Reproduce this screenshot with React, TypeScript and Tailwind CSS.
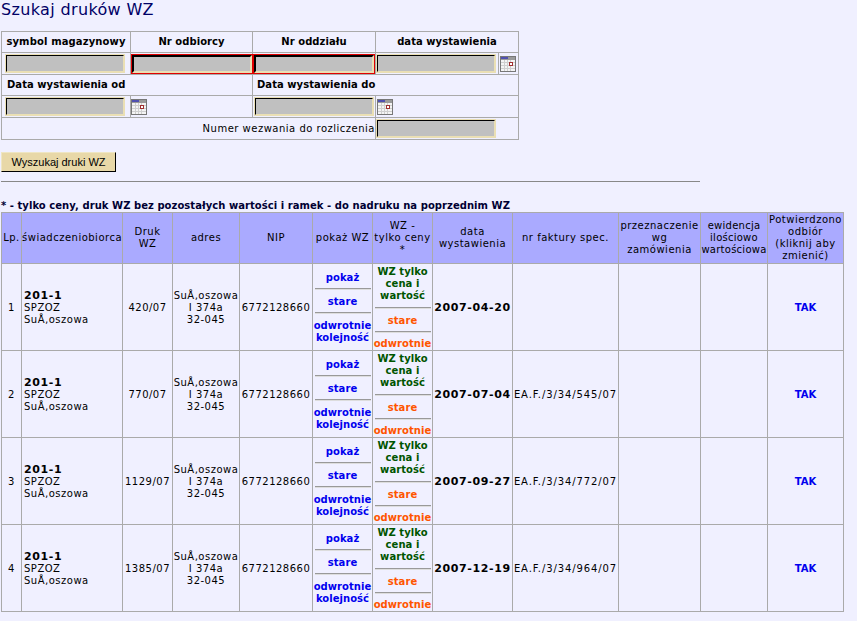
const font = "font-['DejaVu_Sans','Verdana',sans-serif]";

function CalendarIcon() {
  return (
    <svg width="16" height="16" viewBox="0 0 16 16" className="block">
      <rect x="0.5" y="0.5" width="15" height="15" fill="#f4f4f4" stroke="#777" />
      <rect x="1" y="1" width="14" height="3" fill="#9a9a9a" />
      <rect x="1" y="1" width="7" height="2" fill="#5050b0" />
      <path d="M1 6.5H15M1 9.5H15M1 12.5H15M4.5 4V15M7.5 4V15M10.5 4V15" stroke="#cfcfcf" strokeWidth="1" />
      <rect x="9.5" y="6.5" width="3" height="3" fill="#fff" stroke="#a03030" />
    </svg>
  );
}

function Field({ red = false }: { red?: boolean }) {
  return (
    <input
      readOnly
      className={
        red
          ? "block w-[120px] h-[18px] mx-auto bg-[#c0c0c0] border-2 border-t-black border-l-black border-r-[#eadfb4] border-b-[#eadfb4] outline outline-1 outline-offset-0 outline-[#e00000]"
          : "block w-[118px] h-[17px] m-[1px] bg-[#c0c0c0] border border-t-black border-l-black border-r-[#eadfb4] border-b-[#eadfb4] outline outline-1 outline-offset-0 outline-[#eadfb4]"
      }
    />
  );
}

const cols = [20, 101, 50, 67, 73, 60, 60, 80, 106, 82, 67, 76];
const headers = [
  <>Lp.</>,
  <>świadczeniobiorca</>,
  <>Druk<br />WZ</>,
  <>adres</>,
  <>NIP</>,
  <>pokaż WZ</>,
  <>WZ -<br />tylko ceny<br />*</>,
  <>data<br />wystawienia</>,
  <>nr faktury spec.</>,
  <>przeznaczenie<br />wg<br />zamówienia</>,
  <span className="tracking-[0.25px]">ewidencja<br />ilościowo<br />wartościowa</span>,
  <>Potwierdzono<br />odbiór<br />(kliknij aby<br />zmienić)</>,
];
const rows = [
  { n: 1, druk: "420/07", data: "2007-04-20", fak: "" },
  { n: 2, druk: "770/07", data: "2007-07-04", fak: "EA.F./3/34/545/07" },
  { n: 3, druk: "1129/07", data: "2007-09-27", fak: "EA.F./3/34/772/07" },
  { n: 4, druk: "1385/07", data: "2007-12-19", fak: "EA.F./3/34/964/07" },
];
const cell = "border border-[#aaaaaa] p-0 text-center align-middle";
const mid = `${cell} pt-[2px]`;
const sep = "w-[56px] mx-auto border-t border-[#999999] border-b border-b-[#dddddd] h-[2px]";
const bold = "font-bold tracking-[0.05px]";

export default function App() {
  return (
    <div className={`${font} w-[857px] h-[621px] overflow-hidden bg-[#f0f0ff] text-[10px] tracking-[0.5px] leading-[12px] text-black`}>
      <h1 className="text-[16px] tracking-[0.35px] leading-[20px] text-[#000066] pl-[1px] h-[31px]">Szukaj druków WZ</h1>

      <table className="ml-[1px] w-[517px] table-fixed border-collapse">
        <colgroup>
          <col className="w-[129px]" />
          <col className="w-[122px]" />
          <col className="w-[123px]" />
          <col className="w-[123px]" />
          <col className="w-[20px]" />
        </colgroup>
        <tbody>
          <tr className={`h-[21px] ${bold}`}>
            <td className={`${cell} whitespace-nowrap tracking-[0.13px]`}>symbol magazynowy</td>
            <td className={cell}>Nr odbiorcy</td>
            <td className={cell}>Nr oddziału</td>
            <td className={cell} colSpan={2}>data wystawienia</td>
          </tr>
          <tr className="h-[22px]">
            <td className={cell}><div className="pl-[3px]"><Field /></div></td>
            <td className={cell}><Field red /></td>
            <td className={cell}><Field red /></td>
            <td className={cell}><Field /></td>
            <td className={cell}><div className="pl-[1px]"><CalendarIcon /></div></td>
          </tr>
          <tr className={`h-[21px] ${bold}`}>
            <td className={`${cell} !text-left pl-[5px] whitespace-nowrap`} colSpan={2}>Data wystawienia od</td>
            <td className={`${cell} !text-left pl-[4px] whitespace-nowrap`} colSpan={3}>Data wystawienia do</td>
          </tr>
          <tr className="h-[22px]">
            <td className={cell}><div className="pl-[3px]"><Field /></div></td>
            <td className={cell}><CalendarIcon /></td>
            <td className={cell}><div className="pl-[1px]"><Field /></div></td>
            <td className={cell} colSpan={2}><div className="pl-[1px]"><CalendarIcon /></div></td>
          </tr>
          <tr className="h-[22px]">
            <td className={`${cell} !text-right`} colSpan={3}>Numer wezwania do rozliczenia</td>
            <td className={`${cell} !text-left`} colSpan={2}><Field /></td>
          </tr>
        </tbody>
      </table>

      <button className="block ml-[1px] mt-[12px] h-[20px] w-[115px] bg-[#e8d8a8] border border-[#efe6c4] border-r-black border-b-black text-[11px] tracking-normal leading-[16px] font-['Liberation_Sans',sans-serif] text-black">
        Wyszukaj druki WZ
      </button>

      <hr className="ml-[1px] mt-[9px] w-[699px] border-0 border-t border-[#888888]" />

      <p className={`pl-[1px] mt-[18px] h-[12px] ${bold} text-[#000033] whitespace-nowrap`}>
        * - tylko ceny, druk WZ bez pozostałych wartości i ramek - do nadruku na poprzednim WZ
      </p>

      <table className="ml-[1px] w-[842px] table-fixed border-collapse">
        <colgroup>
          {cols.map((w, i) => (
            <col key={i} style={{ width: w }} />
          ))}
        </colgroup>
        <thead>
          <tr className="h-[51px] bg-[#aaaaff]">
            {headers.map((h, i) => (
              <th key={i} className={`${cell} font-normal whitespace-nowrap`}>{h}</th>
            ))}
          </tr>
        </thead>
        <tbody>
          {rows.map((r) => (
            <tr key={r.n} className="h-[87px]">
              <td className={mid}>{r.n}</td>
              <td className={`${mid} !text-left pl-[2px]`}>
                <div className="font-bold text-[11px] tracking-[0.6px] leading-[12px]">201-1</div>
                <div>SPZOZ</div>
                <div>SuÅ‚oszowa</div>
              </td>
              <td className={mid}>{r.druk}</td>
              <td className={mid}>SuÅ‚oszowa<br />I 374a<br />32-045</td>
              <td className={mid}>6772128660</td>
              <td className={`${cell} ${bold} text-[#0000ee] !align-top whitespace-nowrap`}>
                <div className="h-[24px] leading-[27px]">pokaż</div>
                <div className={sep} />
                <div className="h-[22px] leading-[23px]">stare</div>
                <div className={sep} />
                <div className="mt-[6px]">odwrotnie<br />kolejność</div>
              </td>
              <td className={`${cell} ${bold} !align-top whitespace-nowrap`}>
                <div className="text-[#005500] pt-[2px]">WZ tylko<br />cena i<br />wartość</div>
                <div className={`${sep} mt-[5px]`} />
                <div className="h-[22px] leading-[24px] text-[#ff5500]">stare</div>
                <div className={sep} />
                <div className="mt-[5px] h-[11px] text-[#ff5500]">odwrotnie</div>
              </td>
              <td className={`${mid} font-bold text-[11px] tracking-[0.6px] whitespace-nowrap`}>{r.data}</td>
              <td className={`${mid} tracking-[0.9px] whitespace-nowrap`}>{r.fak}</td>
              <td className={cell}></td>
              <td className={cell}></td>
              <td className={`${mid} ${bold} text-[#0000ee]`}>TAK</td>
            </tr>
          ))}
        </tbody>
      </table>
    </div>
  );
}
